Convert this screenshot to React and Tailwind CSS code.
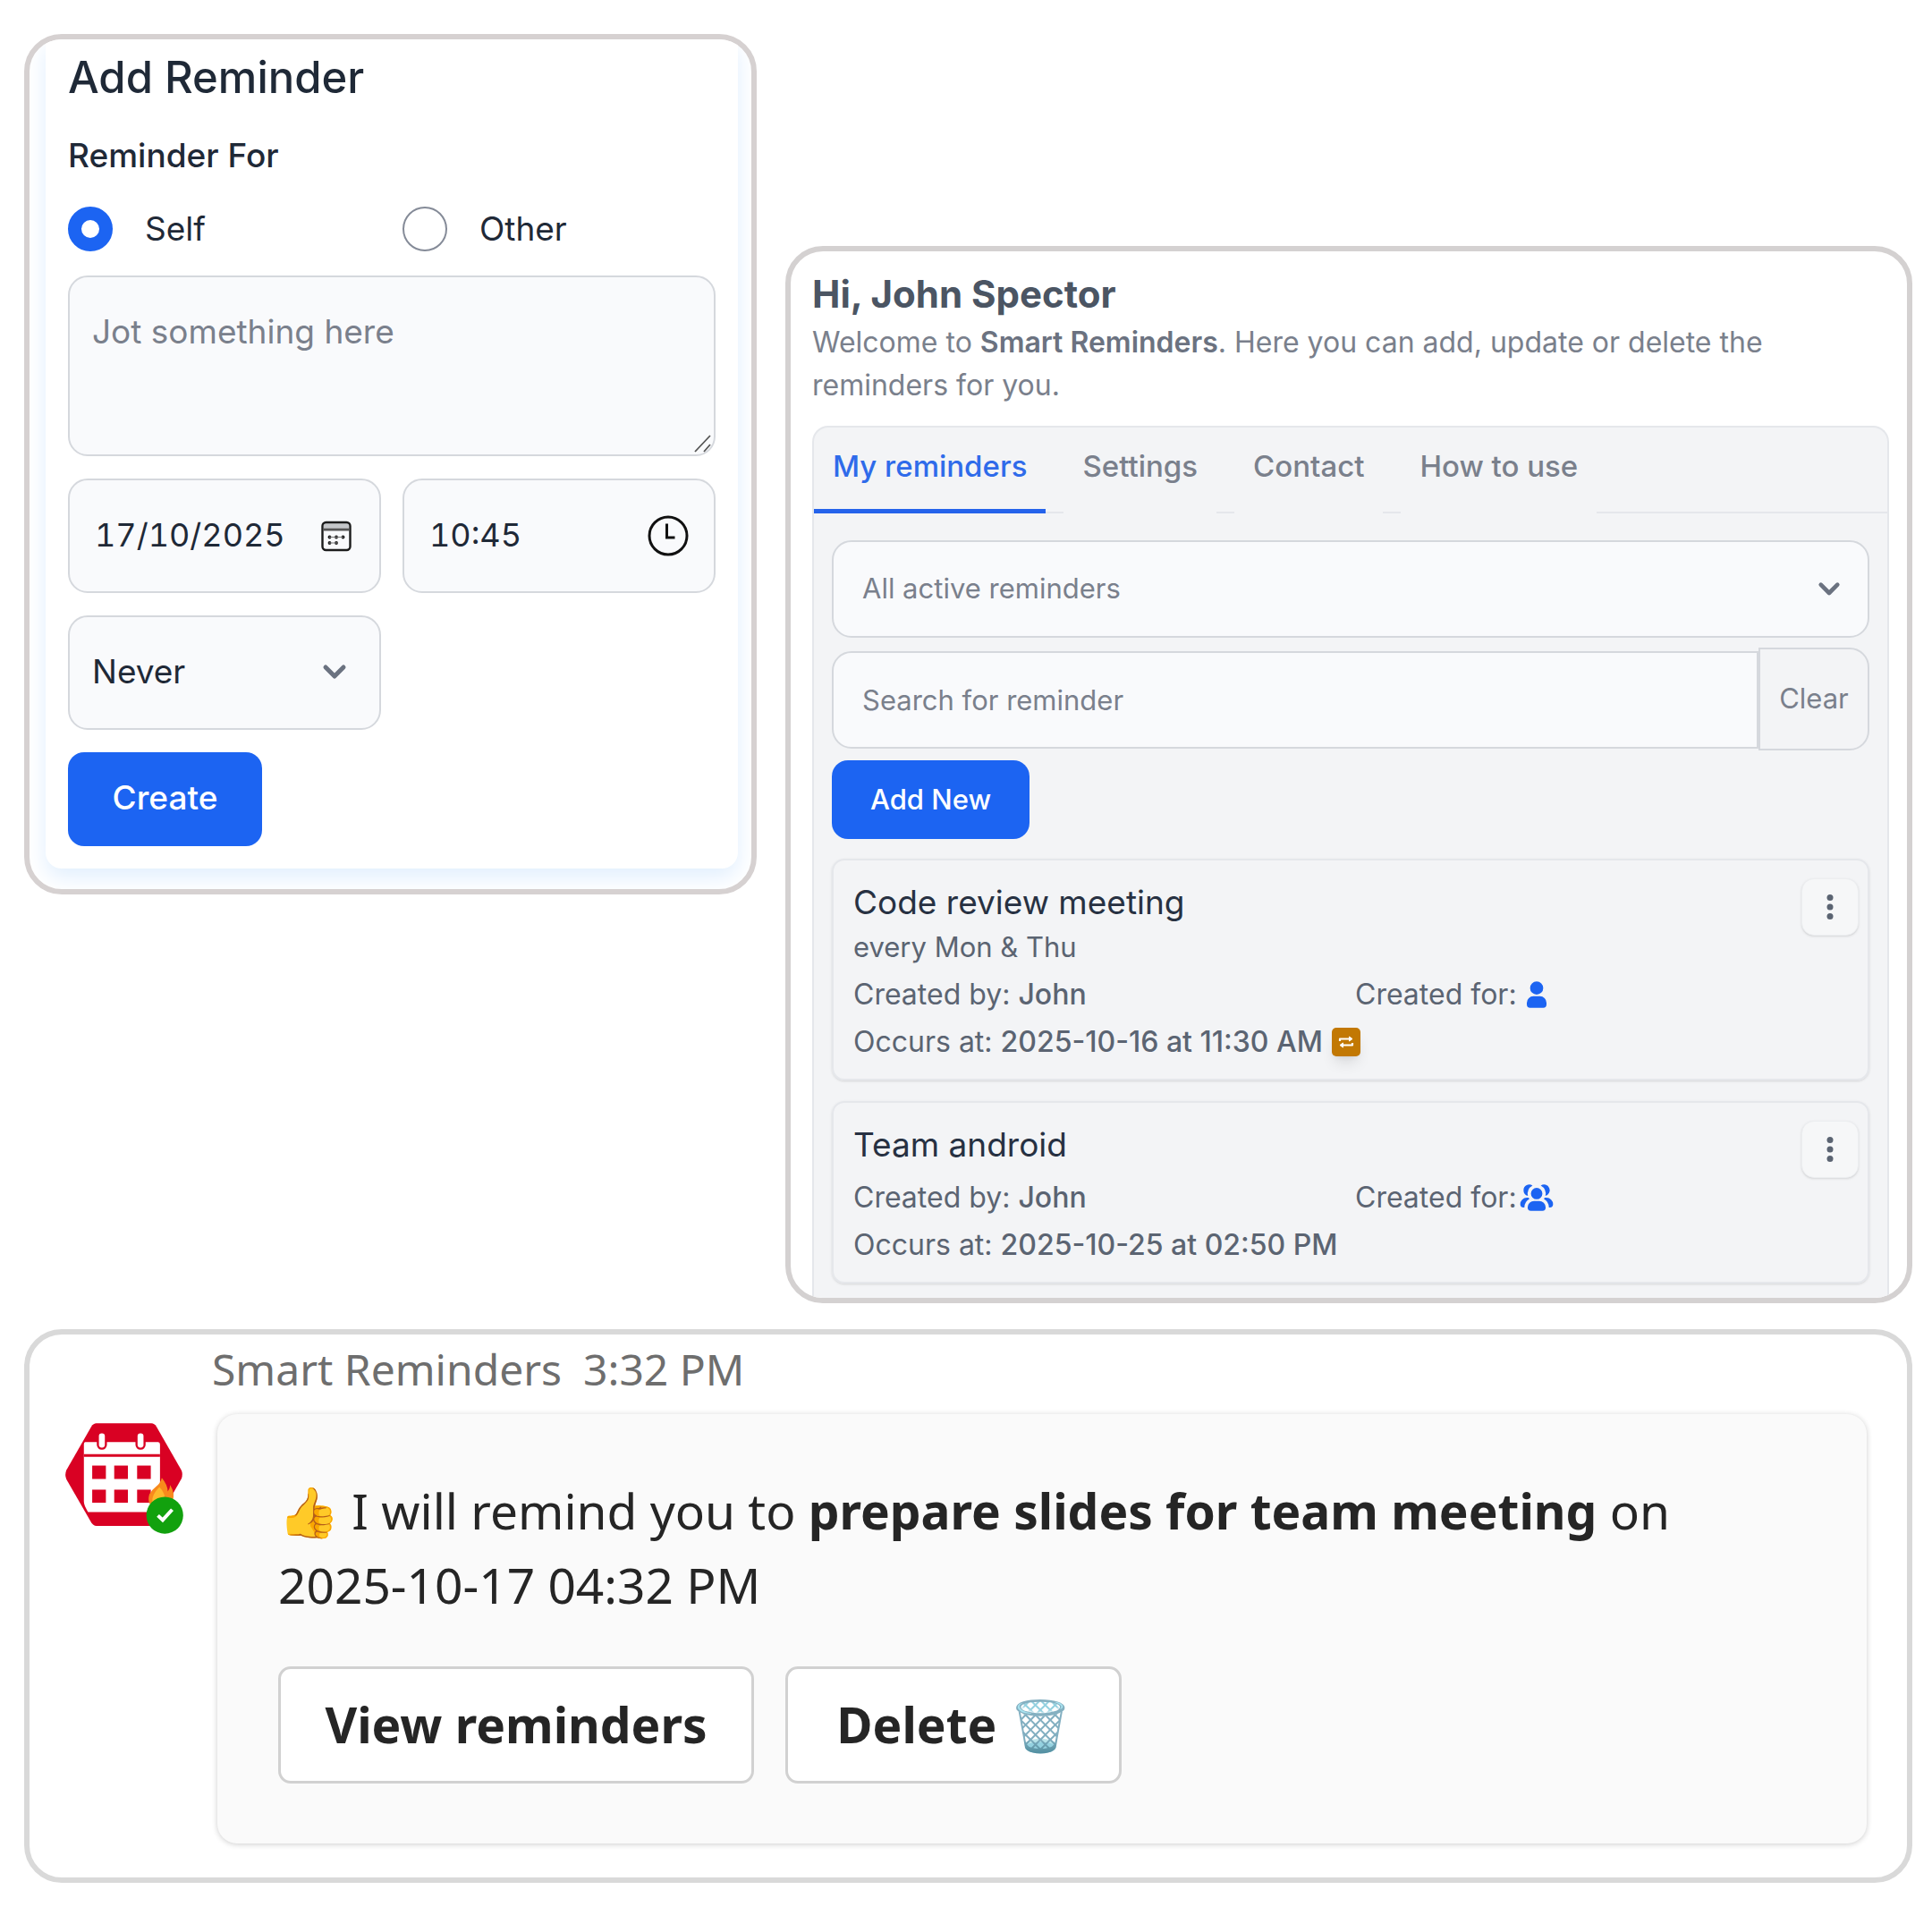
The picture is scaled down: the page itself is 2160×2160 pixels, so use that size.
import React from 'react';

const tabs = ['My reminders', 'Settings', 'Contact', 'How to use'];

const reminders = [
  {
    title: 'Code review meeting',
    note: 'every Mon & Thu',
    createdBy: 'John',
    group: false,
    date: '2025-10-16 at 11:30 AM',
    repeats: true,
  },
  {
    title: 'Team android',
    createdBy: 'John',
    group: true,
    date: '2025-10-25 at 02:50 PM',
    repeats: false,
  },
];

const ChevronIcon = ({ className }) => (
  <svg className={className} viewBox="0 0 28 18" fill="none" stroke="#6b7280" strokeWidth="5" strokeLinecap="round" strokeLinejoin="round" aria-hidden="true">
    <path d="M4 4l10 10L24 4" />
  </svg>
);

const CalendarIcon = () => (
  <svg className="size-9 shrink-0" viewBox="0 0 36 36" fill="none" stroke="#1c1c1c" strokeWidth="2.4" aria-hidden="true">
    <path d="M4 6.500h28" strokeWidth="5" stroke="#c4c6c9" />
    <rect x="2.500" y="3" width="31" height="31" rx="4" />
    <path d="M3 11h30" strokeWidth="3" stroke="#555" />
    <g fill="#1c1c1c" stroke="none">
      <circle cx="10.500" cy="19.500" r="1.900" />
      <circle cx="18" cy="19.500" r="1.900" />
      <circle cx="25.500" cy="19.500" r="1.900" />
      <circle cx="10.500" cy="26" r="1.900" />
      <circle cx="18" cy="26" r="1.900" />
    </g>
    <path d="M10 19.500h16M10 26h9" stroke="#777" strokeWidth="1" />
  </svg>
);

const ClockIcon = () => (
  <svg className="size-[46px] shrink-0" viewBox="0 0 46 46" fill="none" stroke="#111" strokeWidth="3" aria-hidden="true">
    <circle cx="23" cy="23" r="21" />
    <path d="M21.500 9.500v15.500h9" />
  </svg>
);

const UserIcon = () => (
  <svg className="size-11" viewBox="0 0 24 24" fill="#1c64f2" aria-hidden="true">
    <path fillRule="evenodd" d="M12 4a4 4 0 1 0 0 8 4 4 0 0 0 0-8Zm-2 9a4 4 0 0 0-4 4v1a2 2 0 0 0 2 2h8a2 2 0 0 0 2-2v-1a4 4 0 0 0-4-4h-4Z" />
  </svg>
);

const GroupIcon = () => (
  <svg className="size-11" viewBox="0 0 24 24" fill="#1c64f2" aria-hidden="true">
    <path fillRule="evenodd" d="M12 6a3.5 3.5 0 1 0 0 7 3.5 3.5 0 0 0 0-7Zm-1.500 8a4 4 0 0 0-4 4 2 2 0 0 0 2 2h7a2 2 0 0 0 2-2 4 4 0 0 0-4-4h-3Zm6.820-3.096a5.510 5.510 0 0 0-2.797-6.293 3.500 3.500 0 1 1 2.796 6.292ZM19.500 18h.5a2 2 0 0 0 2-2 4 4 0 0 0-4-4h-1.100a5.503 5.503 0 0 1-.471.762A5.998 5.998 0 0 1 19.500 18ZM4 7.500a3.500 3.500 0 0 1 5.477-2.889 5.500 5.500 0 0 0-2.796 6.293A3.501 3.501 0 0 1 4 7.500ZM7.100 12H6a4 4 0 0 0-4 4 2 2 0 0 0 2 2h.5a5.998 5.998 0 0 1 3.071-5.238A5.505 5.505 0 0 1 7.100 12Z" />
  </svg>
);

const RepeatBadge = () => (
  <span className="flex size-8 items-center justify-center rounded-[5px] bg-[#c27803] shadow-lg">
    <svg className="size-5" viewBox="0 0 20 20" fill="none" stroke="#fff" strokeWidth="2.2" strokeLinejoin="round" aria-hidden="true">
      <path d="M3 9V6.500h11" />
      <path d="M17 11v2.500H6" />
      <path d="M13.500 4v5l3.500-2.500z" fill="#fff" strokeWidth="1" />
      <path d="M6.500 11v5L3 13.500z" fill="#fff" strokeWidth="1" />
    </svg>
  </span>
);

const BotLogo = () => (
  <svg className="h-32 w-[135px]" viewBox="90 85 405 385" aria-hidden="true">
    <path d="M200 92H385Q395 92 402 103L486 250Q492 264 486 278L402 426Q395 437 385 437H200Q190 437 183 426L99 280Q93 265 99 250L183 103Q190 92 200 92Z" fill="#d90123" />
    <path d="M162 155h246q6 0 6 8v220q0 7-8 7H172q-14-22-14-34V163q0-8 4-8z" fill="#fff" />
    <path d="M158 200h256" stroke="#d90123" strokeWidth="9" />
    <g fill="#fff" stroke="#d90123" strokeWidth="7">
      <rect x="205" y="122" width="27" height="55" rx="13" />
      <rect x="335" y="122" width="27" height="55" rx="13" />
    </g>
    <g fill="#d90123">
      <rect x="186" y="234" width="46" height="45" />
      <rect x="260" y="234" width="46" height="45" />
      <rect x="337" y="234" width="46" height="45" />
      <rect x="186" y="315" width="46" height="44" />
      <rect x="260" y="315" width="46" height="44" />
      <rect x="337" y="315" width="46" height="44" />
    </g>
    <path d="M420 275q20 24 20 46 8-8 8-22 18 28 8 56-20 24-56 20-32-6-22-44 6-14 22-26 16-12 20-30z" fill="#f88a1c" />
    <path d="M412 306q20 20 20 50h-44q-2-24 24-50z" fill="#fdb92c" />
    <circle cx="430" cy="401" r="62" fill="#12a10e" />
    <path d="M407 402l16 15 32-35" fill="none" stroke="#fff" strokeWidth="12" />
  </svg>
);

const fieldClass = 'rounded-[22px] border-2 border-[#d5d8dd] bg-[#f9fafc]';

const AddReminderForm = () => (
  <section className="self-start overflow-hidden rounded-[42px] border-[6px] border-[#d6d1d1] bg-white pb-[23px] pl-[18px] pr-[15px]">
    <form className="flex flex-col rounded-b-[18px] bg-white px-[25px] pb-[25px] pt-[15px] text-[37px] leading-[48px] text-[#1f2937] shadow-[0_10px_24px_#e1effe]">
      <h1 className="text-[49px] font-medium leading-[56px]">Add Reminder</h1>
      <fieldset className="mt-[35px]">
        <legend className="font-medium">Reminder For</legend>
        <div className="mt-[33px] grid grid-cols-2 gap-6">
          <label className="flex items-center gap-9">
            <input type="radio" name="target" defaultChecked className="size-[50px] appearance-none rounded-full border-2 border-[#858b98] bg-white checked:border-[15px] checked:border-[#1c64f2]" />
            Self
          </label>
          <label className="flex items-center gap-9">
            <input type="radio" name="target" className="size-[50px] appearance-none rounded-full border-2 border-[#858b98] bg-white checked:border-[15px] checked:border-[#1c64f2]" />
            Other
          </label>
        </div>
      </fieldset>
      <div className="relative mt-[27px] flex">
        <textarea aria-label="Reminder text" placeholder="Jot something here" className={`h-[202px] w-full resize-none px-[25px] py-[37px] placeholder:text-[#7a808c] ${fieldClass}`} />
        <svg className="absolute bottom-1 right-1 size-5" viewBox="0 0 20 20" stroke="#555" strokeWidth="1.8" aria-hidden="true">
          <path d="M1 19L18 1M11 19l7-8" />
        </svg>
      </div>
      <div className="mt-[25px] grid grid-cols-2 gap-x-6 gap-y-[25px]">
        <div className={`flex h-32 items-center justify-between pl-7 pr-[30px] ${fieldClass}`}>
          <input aria-label="Date" type="text" defaultValue="17/10/2025" className="w-full min-w-0 bg-transparent pb-0.5 text-[36px] tabular-nums outline-none" />
          <CalendarIcon />
        </div>
        <div className={`flex h-32 items-center justify-between px-7 ${fieldClass}`}>
          <input aria-label="Time" type="text" defaultValue="10:45" className="w-full min-w-0 bg-transparent pb-0.5 text-[36px] tabular-nums outline-none" />
          <ClockIcon />
        </div>
        <div className="relative">
          <select aria-label="Repeat" className={`h-32 w-full appearance-none px-[25px] pb-0.5 ${fieldClass}`}>
            <option>Never</option>
          </select>
          <ChevronIcon className="pointer-events-none absolute right-[38px] top-[54px] w-7" />
        </div>
      </div>
      <button type="button" className="mt-[25px] h-[105px] w-[217px] rounded-[18px] bg-[#1c64f2] pb-1 font-medium text-white">Create</button>
    </form>
  </section>
);

const ReminderCard = ({ reminder }) => (
  <li className="relative rounded-[14px] border-2 border-[#e5e7eb] px-[22px] pb-[15px] shadow-sm">
    <h3 className="pt-[23px] text-[37px] leading-[48px] text-[#273142]">{reminder.title}</h3>
    {reminder.note ? <p className="text-[31px] leading-[52px]">{reminder.note}</p> : <div className="h-2" />}
    <div className="grid grid-cols-2 gap-x-2.5">
      <p className="leading-[53px]">Created by: <span className="font-medium">{reminder.createdBy}</span></p>
      <p className="flex h-[53px] items-center leading-[53px]">
        Created for:
        {reminder.group ? <GroupIcon /> : <UserIcon />}
      </p>
    </div>
    <p className="flex items-center gap-2.5 leading-[53px]">
      <span>Occurs at: <span className="font-medium">{reminder.date}</span></span>
      {reminder.repeats && <RepeatBadge />}
    </p>
    <button type="button" aria-label="Reminder options" className="absolute right-2.5 top-5 flex size-16 items-center justify-center rounded-[14px] border border-[#eceef0] bg-[#f6f7f8] shadow">
      <svg className="h-8 w-2" viewBox="0 0 8 32" fill="#5b6472" aria-hidden="true">
        <circle cx="4" cy="5.500" r="3.500" />
        <circle cx="4" cy="16" r="3.500" />
        <circle cx="4" cy="26.500" r="3.500" />
      </svg>
    </button>
  </li>
);

const Dashboard = () => (
  <section className="mt-[237px] overflow-hidden rounded-[42px] border-[6px] border-[#d4d1d1] bg-white pl-6 pr-5 pt-6 text-[31px] text-[#7a808c]">
    <h2 className="text-[42px] font-bold leading-[48px] text-[#4b5563]">Hi, John Spector</h2>
    <p className="mt-1.5 pr-20 text-[32px] leading-[48px]">
      Welcome to <strong className="font-semibold text-[#6b7280]">Smart Reminders</strong>. Here you can add, update or delete the reminders for you.
    </p>
    <div className="mt-[21px] rounded-t-[18px] border-2 border-b-0 border-[#e5e7eb] bg-[#f3f4f6] pb-4">
      <nav className="border-b-2 border-[#e5e7eb]">
        <ul className="-mb-0.5 flex gap-5">
          {tabs.map((tab, i) => (
            <li key={tab}>
              <button type="button" className={`h-24 border-b-[5px] px-[21px] pb-1 text-[33px] font-medium ${i === 0 ? 'border-[#2563eb] text-[#2f6bea]' : 'border-[#f3f4f6]'}`}>{tab}</button>
            </li>
          ))}
        </ul>
      </nav>
      <div className="flex flex-col px-5 pt-[30px]">
        <div className="relative">
          <select aria-label="Filter reminders" className={`h-[109px] w-full appearance-none px-8 ${fieldClass}`}>
            <option>All active reminders</option>
          </select>
          <ChevronIcon className="pointer-events-none absolute right-8 top-[46px] w-[26px]" />
        </div>
        <div className="mt-[11px] flex items-end">
          <input aria-label="Search" type="text" placeholder="Search for reminder" className="mb-0.5 h-[109px] min-w-0 flex-1 rounded-l-[22px] border-2 border-[#d5d8dd] bg-[#f9fafc] px-8 placeholder:text-[#7a808c]" />
          <button type="button" className="h-[115px] w-[124px] rounded-r-[22px] border-2 border-[#d5d8dd]">Clear</button>
        </div>
        <button type="button" className="mt-[11px] h-[88px] w-[221px] rounded-[18px] bg-[#1c64f2] font-medium text-white">Add New</button>
        <ul className="mt-[22px] flex flex-col gap-[23px] text-[32px] text-[#5b6472]">
          {reminders.map((reminder) => (
            <ReminderCard key={reminder.title} reminder={reminder} />
          ))}
        </ul>
      </div>
    </div>
  </section>
);

const BotMessage = () => (
  <section className="col-span-2 mt-[29px] rounded-[42px] border-[6px] border-[#d9d9d9] bg-white pb-[38px] pl-[38px] pr-[45px] pt-2 font-['Noto_Sans',sans-serif]">
    <div className="grid grid-cols-[135px_1fr] gap-x-[31px]">
      <p className="col-start-2 flex h-[81px] gap-6 text-[48px] leading-[62px] text-[#6e6e6e]">
        <span>Smart Reminders</span>
        <time>3:32 PM</time>
      </p>
      <div className="pt-2">
        <BotLogo />
      </div>
      <div className="ml-1.5 rounded-[22px] bg-[#fafafa] px-[68px] pb-[67px] pt-[66px] text-[55px] leading-[83px] text-[#252525] shadow-[0_1px_6px_rgba(0,0,0,0.2)]">
        <p>
          👍 I will remind you to <strong className="font-bold">prepare slides for team meeting</strong> on
          <br />
          2025-10-17 04:32 PM
        </p>
        <div className="mt-[50px] flex gap-[35px]">
          <button type="button" className="h-[131px] w-[532px] rounded-[14px] border-[3px] border-[#d1d1d1] bg-white pb-0.5 font-bold">View reminders</button>
          <button type="button" className="h-[131px] w-[376px] rounded-[14px] border-[3px] border-[#d1d1d1] bg-white pb-0.5 font-bold">Delete 🗑️</button>
        </div>
      </div>
    </div>
  </section>
);

const App = () => {
  return (
    <main className="grid min-h-screen grid-cols-[819fr_1260fr] content-start gap-x-8 bg-white pb-10 pl-[27px] pr-[22px] pt-[38px] font-[Inter,sans-serif]">
      <AddReminderForm />
      <Dashboard />
      <BotMessage />
    </main>
  );
};

export default App;
